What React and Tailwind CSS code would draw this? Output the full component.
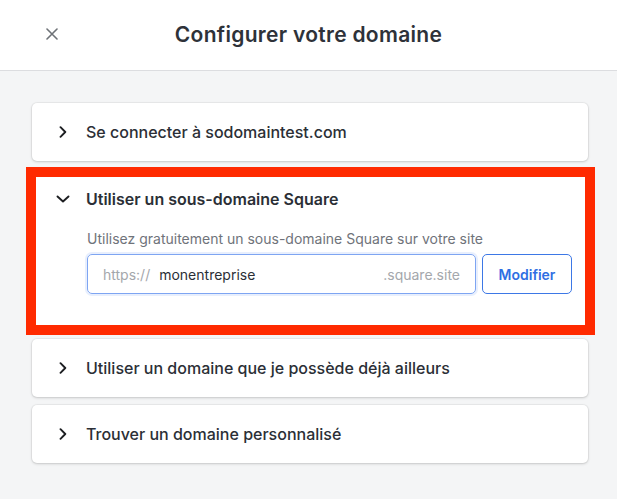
const font = { fontFamily: "Inter, 'Noto Sans', sans-serif" };

function ChevronRight() {
  return (
    <svg width="10" height="12" viewBox="0 0 10 12" fill="none" className="shrink-0">
      <path d="M2.5 1.2 L7.3 6 L2.5 10.8" stroke="#1c1e21" strokeWidth="1.9" strokeLinecap="round" strokeLinejoin="round" />
    </svg>
  );
}

function ChevronDown() {
  return (
    <svg width="14" height="10" viewBox="0 0 14 10" fill="none" className="shrink-0">
      <path d="M1.5 2.5 L7 7.5 L12.5 2.5" stroke="#1c1e21" strokeWidth="1.9" strokeLinecap="round" strokeLinejoin="round" />
    </svg>
  );
}

function CollapsedCard({ title }) {
  return (
    <div className="flex h-[58px] items-center gap-[18px] rounded-[5px] bg-white pl-[26px] shadow-[0_0_0_1px_rgba(0,0,0,0.04),0_1px_3px_rgba(0,0,0,0.16)]">
      <ChevronRight />
      <span className="text-[16px] font-medium text-[#2b2f36]">{title}</span>
    </div>
  );
}

export default function App() {
  return (
    <div className="flex h-[499px] flex-col bg-[#f4f5f6]" style={font}>
      <header className="relative flex h-[71px] shrink-0 items-center justify-center border-b border-[#dcdde0] bg-white">
        <button type="button" className="absolute left-[44px] top-[26px] p-[2px]">
          <svg width="12" height="12" viewBox="0 0 12 12" fill="none">
            <path d="M1 1 L11 11 M11 1 L1 11" stroke="#6e7277" strokeWidth="1.6" strokeLinecap="round" />
          </svg>
        </button>
        <h1 className="text-[21px] font-semibold tracking-[0.3px] text-[#2e3239]">Configurer votre domaine</h1>
      </header>

      <main className="flex flex-col gap-[8px] pl-[32px] pr-[29px] pt-[32px]">
        <CollapsedCard title="Se connecter à sodomaintest.com" />

        <div className="relative">
          <div className="rounded-[5px] bg-white pb-[37px] pl-[24px] pr-[16px] pt-[18px] shadow-[0_0_0_1px_rgba(0,0,0,0.04),0_1px_3px_rgba(0,0,0,0.16)]">
            <div className="flex items-center gap-[16px]">
              <ChevronDown />
              <span className="text-[16px] font-semibold text-[#2b2f36]">Utiliser un sous-domaine Square</span>
            </div>
            <div className="pl-[31px]">
              <p className="mt-[17px] text-[14px] text-[#6f737a]">
                Utilisez gratuitement un sous-domaine Square sur votre site
              </p>
              <div className="mt-[5px] flex gap-[6px]">
                <div className="flex h-[40px] flex-1 items-center rounded-[5px] border border-[#7ea5f2] px-[15px] text-[14px] shadow-[0_0_0_2px_rgba(126,165,242,0.18)]">
                  <span className="text-[#a4a7ac]">https://</span>
                  <span className="ml-[9px] text-[#2b2f36]">monentreprise</span>
                  <span className="ml-auto text-[#a4a7ac]">.square.site</span>
                </div>
                <button
                  type="button"
                  className="h-[40px] w-[90px] rounded-[5px] border border-[#3d78e6] text-[14px] font-semibold text-[#2f6fe3]"
                >
                  Modifier
                </button>
              </div>
            </div>
          </div>
          <div className="pointer-events-none absolute -bottom-[4px] -left-[6px] -right-[7px] -top-[2px] border-[10px] border-[#ff2a00]" />
        </div>

        <CollapsedCard title="Utiliser un domaine que je possède déjà ailleurs" />
        <CollapsedCard title="Trouver un domaine personnalisé" />
      </main>
    </div>
  );
}
